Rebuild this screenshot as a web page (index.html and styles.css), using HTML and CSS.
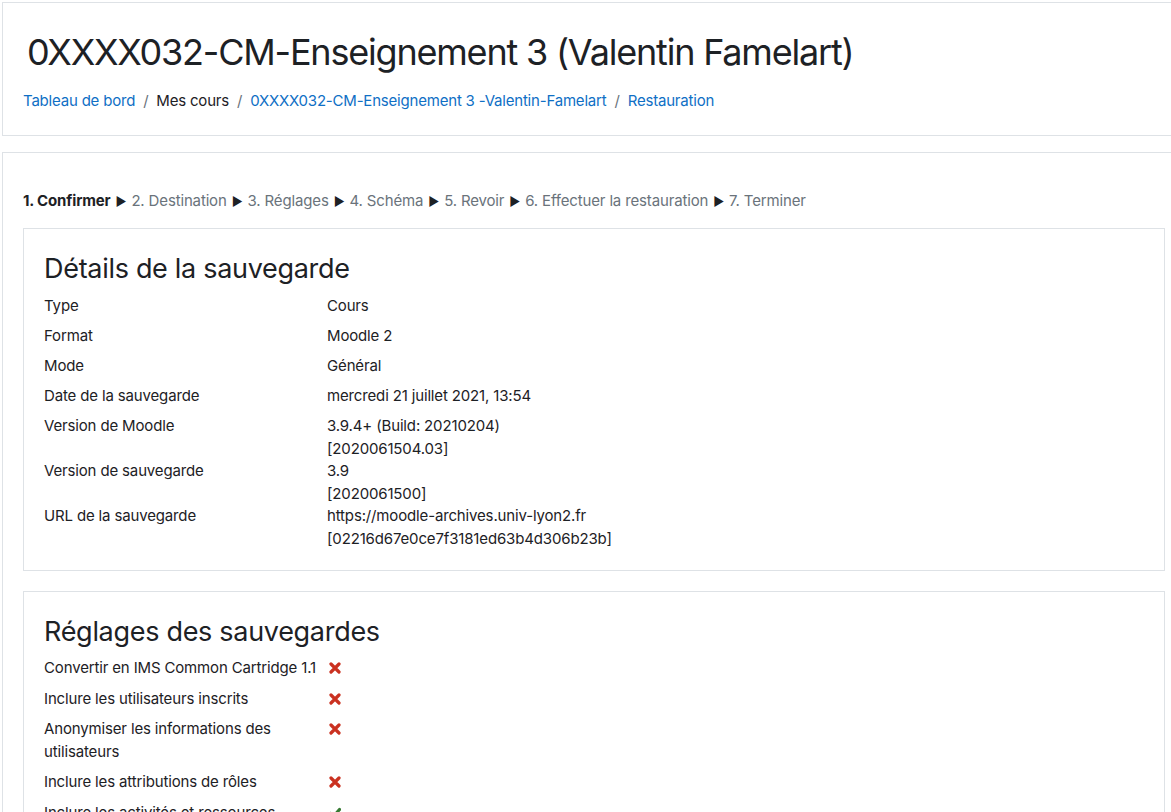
FILE: index.html
```html
<!DOCTYPE html>
<html lang="fr">
<head>
<meta charset="utf-8">
<title>Restauration</title>
<link rel="stylesheet" href="styles.css">
</head>
<body>
<div class="page">
  <header class="card header-card">
    <h1 class="page-title">0XXXX032-CM-Enseignement 3 (Valentin Famelart)</h1>
    <nav class="breadcrumb">
      <a href="#">Tableau de bord</a><span class="sep">/</span><span class="crumb">Mes cours</span><span class="sep">/</span><a href="#">0XXXX032-CM-Enseignement 3 -Valentin-Famelart</a><span class="sep">/</span><a href="#">Restauration</a>
    </nav>
  </header>

  <main class="card main-card">
    <div class="steps">
      <span class="step current">1. Confirmer</span><span class="arrow">▶</span><span class="step">2. Destination</span><span class="arrow">▶</span><span class="step">3. Réglages</span><span class="arrow">▶</span><span class="step">4. Schéma</span><span class="arrow">▶</span><span class="step">5. Revoir</span><span class="arrow">▶</span><span class="step">6. Effectuer la restauration</span><span class="arrow">▶</span><span class="step">7. Terminer</span>
    </div>

    <section class="box details">
      <h2 class="box-title">Détails de la sauvegarde</h2>
      <div class="pair"><div class="label">Type</div><div class="value">Cours</div></div>
      <div class="pair"><div class="label">Format</div><div class="value">Moodle 2</div></div>
      <div class="pair"><div class="label">Mode</div><div class="value">Général</div></div>
      <div class="pair"><div class="label">Date de la sauvegarde</div><div class="value">mercredi 21 juillet 2021, 13:54</div></div>
      <div class="pair"><div class="label">Version de Moodle</div><div class="value">3.9.4+ (Build: 20210204)<br>[2020061504.03]</div></div>
      <div class="pair"><div class="label">Version de sauvegarde</div><div class="value">3.9<br>[2020061500]</div></div>
      <div class="pair"><div class="label">URL de la sauvegarde</div><div class="value">https://moodle-archives.univ-lyon2.fr<br>[02216d67e0ce7f3181ed63b4d306b23b]</div></div>
    </section>

    <section class="box settings">
      <h2 class="box-title">Réglages des sauvegardes</h2>
      <div class="pair"><div class="label">Convertir en IMS Common Cartridge 1.1</div><div class="value"><svg class="ico no" viewBox="0 0 12 12"><path d="M2 2L10 10M10 2L2 10"/></svg></div></div>
      <div class="pair"><div class="label">Inclure les utilisateurs inscrits</div><div class="value"><svg class="ico no" viewBox="0 0 12 12"><path d="M2 2L10 10M10 2L2 10"/></svg></div></div>
      <div class="pair"><div class="label">Anonymiser les informations des utilisateurs</div><div class="value"><svg class="ico no" viewBox="0 0 12 12"><path d="M2 2L10 10M10 2L2 10"/></svg></div></div>
      <div class="pair"><div class="label">Inclure les attributions de rôles</div><div class="value"><svg class="ico no" viewBox="0 0 12 12"><path d="M2 2L10 10M10 2L2 10"/></svg></div></div>
      <div class="pair"><div class="label">Inclure les activités et ressources</div><div class="value"><svg class="ico yes" viewBox="0 0 12 12"><path d="M1.5 6.5L4.5 9.5L10.5 2.5"/></svg></div></div>
    </section>
  </main>
</div>
</body>
</html>
```

FILE: styles.css
```css
html, body {
  margin: 0;
  padding: 0;
  overflow: hidden;
  background: #ffffff;
}
body {
  font-family: Inter, "Liberation Sans", sans-serif;
  font-size: 15px;
  line-height: 22.5px;
  letter-spacing: -0.15px;
  color: #1d2125;
}
.page {
  padding: 2px 0 0 2px;
  width: 1190px;
}
.card {
  border: 1px solid #dee2e6;
  background: #fff;
  width: 1144px;
  padding: 20px;
}
.header-card {
  height: 92px;
  padding-top: 20px;
}
.page-title {
  margin: 0 0 0 4px;
  font-size: 36px;
  letter-spacing: -1.2px;
  font-weight: 400;
  line-height: 45px;
  padding-top: 7px;
}
.breadcrumb {
  margin-top: 15px;
  display: flex;
  align-items: center;
  letter-spacing: -0.2px;
}
.breadcrumb a {
  color: #0f6fc5;
  text-decoration: none;
}
.sep {
  color: #6a737b;
  padding: 0 8px;
}
.main-card {
  margin-top: 16px;
  border-right: none;
}
.steps {
  margin-top: 17px;
  margin-bottom: 14px;
  color: #6a737b;
}
.steps .current {
  color: #1d2125;
  font-weight: 700;
}
.arrow {
  color: #1d2125;
  font-size: 12px;
  padding: 0 5px;
}
.box {
  border: 1px solid #dee2e6;
  padding: 23px 20px 20px;
  width: 1100px;
  margin-bottom: 20px;
}
.box-title {
  margin: 0 0 10px;
  font-size: 27px;
  letter-spacing: -0.3px;
  font-weight: 400;
  line-height: 33.75px;
}
.settings .box-title {
  margin-bottom: 8px;
}
.pair {
  display: flex;
}
.label {
  width: 283px;
  flex: none;
  padding-bottom: 8px;
}
.details .label {
  padding-bottom: 7.5px;
}
.value {
  flex: 1;
}
.ico {
  width: 12px;
  height: 12px;
  margin-left: 2px;
  margin-top: 5px;
  fill: none;
  stroke-width: 3.2;
  stroke-linecap: round;
  stroke-linejoin: round;
}
.ico.no { stroke: #ca3120; }
.ico.yes { stroke: #357a32; }
```
